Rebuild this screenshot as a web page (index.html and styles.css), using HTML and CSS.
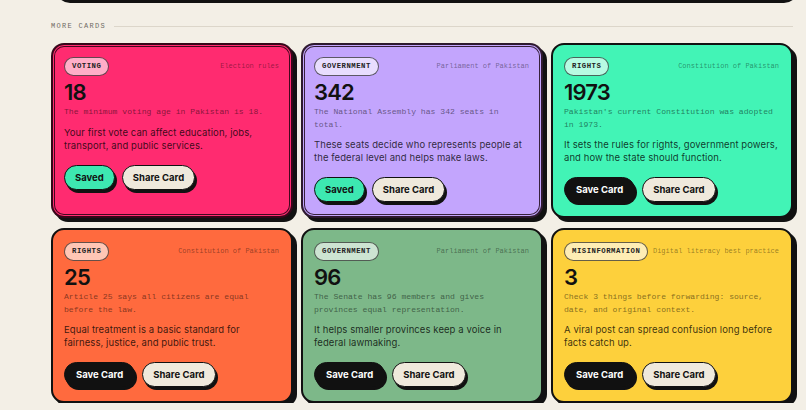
FILE: index.html
```html
<!DOCTYPE html>
<html lang="en">
<head>
   <meta charset="UTF-8">
   <meta name="viewport" content="width=device-width, initial-scale=1.0">
   <title>Civic Cards</title>
   <link rel="stylesheet" href="styles.css">
</head>
<body>
    <div class="panel_end"></div>

    <div class="section_head">
        <span class="section_title">More Cards</span>
        <span class="section_rule"></span>
    </div>

    <div class="cards">
        <div class="card card_pink is_saved">
            <div class="card_head">
                <span class="tag">Voting</span>
                <span class="source">Election rules</span>
            </div>
            <div class="stat">18</div>
            <div class="fact">The minimum voting age in Pakistan is 18.</div>
            <div class="why">Your first vote can affect education, jobs, transport, and public services.</div>
            <div class="actions">
                <button class="btn btn_saved">Saved</button>
                <button class="btn btn_share">Share Card</button>
            </div>
        </div>

        <div class="card card_violet is_saved">
            <div class="card_head">
                <span class="tag">Government</span>
                <span class="source">Parliament of Pakistan</span>
            </div>
            <div class="stat">342</div>
            <div class="fact">The National Assembly has 342 seats in total.</div>
            <div class="why">These seats decide who represents people at the federal level and helps make laws.</div>
            <div class="actions">
                <button class="btn btn_saved">Saved</button>
                <button class="btn btn_share">Share Card</button>
            </div>
        </div>

        <div class="card card_mint">
            <div class="card_head">
                <span class="tag">Rights</span>
                <span class="source">Constitution of Pakistan</span>
            </div>
            <div class="stat">1973</div>
            <div class="fact">Pakistan's current Constitution was adopted in 1973.</div>
            <div class="why">It sets the rules for rights, government powers, and how the state should function.</div>
            <div class="actions">
                <button class="btn btn_save">Save Card</button>
                <button class="btn btn_share">Share Card</button>
            </div>
        </div>

        <div class="card card_orange">
            <div class="card_head">
                <span class="tag">Rights</span>
                <span class="source">Constitution of Pakistan</span>
            </div>
            <div class="stat">25</div>
            <div class="fact">Article 25 says all citizens are equal before the law.</div>
            <div class="why">Equal treatment is a basic standard for fairness, justice, and public trust.</div>
            <div class="actions">
                <button class="btn btn_save">Save Card</button>
                <button class="btn btn_share">Share Card</button>
            </div>
        </div>

        <div class="card card_sage">
            <div class="card_head">
                <span class="tag">Government</span>
                <span class="source">Parliament of Pakistan</span>
            </div>
            <div class="stat">96</div>
            <div class="fact">The Senate has 96 members and gives provinces equal representation.</div>
            <div class="why">It helps smaller provinces keep a voice in federal lawmaking.</div>
            <div class="actions">
                <button class="btn btn_save">Save Card</button>
                <button class="btn btn_share">Share Card</button>
            </div>
        </div>

        <div class="card card_yellow">
            <div class="card_head">
                <span class="tag">Misinformation</span>
                <span class="source">Digital literacy best practice</span>
            </div>
            <div class="stat">3</div>
            <div class="fact">Check 3 things before forwarding: source, date, and original context.</div>
            <div class="why">A viral post can spread confusion long before facts catch up.</div>
            <div class="actions">
                <button class="btn btn_save">Save Card</button>
                <button class="btn btn_share">Share Card</button>
            </div>
        </div>
    </div>
</body>
</html>
```

FILE: styles.css
```css
body {
    margin: 0;
    background: #f3efe6;
    font-family: Inter, "Liberation Sans", sans-serif;
    color: #111;
    overflow: hidden;
}

/* bottom edge of the panel above */
.panel_end {
    height: 16px;
    margin: -13px 8px 0 56px;
    background: #111;
    border-radius: 0 0 14px 14px;
}

.section_head {
    display: flex;
    align-items: center;
    gap: 8px;
    height: 12px;
    margin: 17px 13px 0 51px;
}
.section_title {
    font-family: "Liberation Mono", monospace;
    font-size: 7px;
    letter-spacing: 1.3px;
    text-transform: uppercase;
    color: #6f6b64;
}
.section_rule {
    flex: 1;
    height: 1px;
    background: #dcd6ca;
}

.cards {
    display: grid;
    grid-template-columns: repeat(3, 1fr);
    gap: 10px 8px;
    margin: 11px 13px 0 51px;
    align-items: start;
}

.card {
    --bg: #fff;
    background: var(--bg);
    border: 2px solid #111;
    border-radius: 13px;
    padding: 12px 12px 14px 11px;
    box-shadow: 4px 4px 0 #111;
    align-self: stretch;
}
.card.is_saved {
    border-color: rgba(20, 0, 10, 0.85);
    box-shadow: inset 0 0 0 1px var(--bg), inset 0 0 0 2px rgba(20, 0, 10, 0.8), 4px 4px 0 #111;
}

.card_pink { --bg: #ff2b70; }
.card_violet { --bg: #c3a5fd; }
.card_mint { --bg: #42f4b6; }
.card_orange { --bg: #ff6a3e; }
.card_sage { --bg: #7db889; }
.card_yellow { --bg: #fdd03c; }

.card_head {
    display: flex;
    justify-content: space-between;
    align-items: center;
    height: 18px;
}
.tag {
    display: inline-flex;
    align-items: center;
    height: 17px;
    padding: 0 7px;
    border: 1px solid rgba(0, 0, 0, 0.6);
    border-radius: 10px;
    background: rgba(255, 255, 255, 0.62);
    font-family: "Liberation Mono", monospace;
    font-size: 7.3px;
    font-weight: 700;
    letter-spacing: 0.5px;
    text-transform: uppercase;
    color: #222;
}
.source {
    font-family: "Liberation Mono", monospace;
    font-size: 7px;
    color: rgba(0, 0, 0, 0.42);
}

.stat {
    margin-top: 5px;
    font-size: 22px;
    line-height: 24px;
    font-weight: 600;
    letter-spacing: -0.8px;
}
.fact {
    margin-top: 2px;
    font-family: "Liberation Mono", monospace;
    font-size: 8.1px;
    line-height: 12.5px;
    color: rgba(0, 0, 0, 0.5);
}
.why {
    margin-top: 7px;
    font-size: 9.5px;
    line-height: 13px;
    letter-spacing: 0.08px;
    color: rgba(0, 0, 0, 0.78);
}

.actions {
    display: flex;
    gap: 7px;
    margin-top: 13px;
}
.btn {
    height: 25px;
    padding: 0 10px;
    border: 1.5px solid #111;
    border-radius: 13px;
    box-shadow: 2px 3px 0 #111;
    font-family: Inter, "Liberation Sans", sans-serif;
    font-size: 9.5px;
    font-weight: 700;
    color: #111;
    cursor: pointer;
}
.btn_saved { background: #3de8b1; }
.btn_share { background: #efe9dc; }
.btn_save {
    background: #111;
    color: #fff;
    padding: 0 11px;
}
```
